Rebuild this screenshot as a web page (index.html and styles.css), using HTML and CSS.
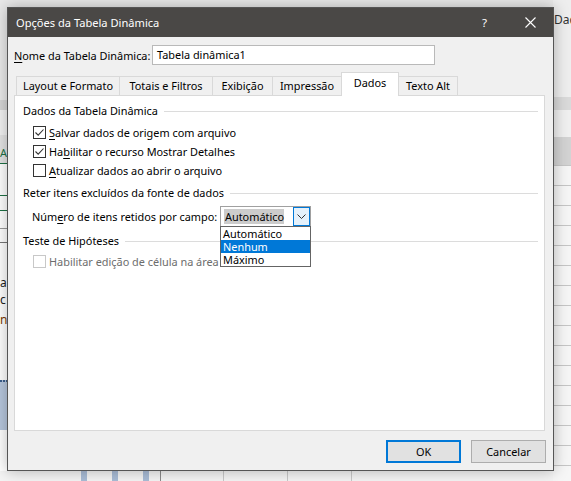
FILE: index.html
```html
<!DOCTYPE html>
<html lang="pt-BR">
<head>
<meta charset="utf-8">
<title>Opções da Tabela Dinâmica</title>
<link rel="stylesheet" href="styles.css">
</head>
<body>
<div class="desk">
  <div class="xl-left">
    <div class="xl-l-band"></div>
    <div class="xl-l-hdr">A</div>
    <div class="xl-l-txt t1">a</div>
    <div class="xl-l-txt t2">c</div>
    <div class="xl-l-txt t3">n</div>
    <div class="xl-l-sel"></div>
  </div>
  <div class="xl-right">
    <span class="dad">Dad</span>
    <div class="xl-r-grid"></div>
  </div>
  <div class="xl-bottom">
    <span class="bar b1"></span><span class="bar b2"></span><span class="bar b3"></span>
  </div>
</div>

<div class="dialog">
  <div class="titlebar">
    <span class="title">Opções da Tabela Dinâmica</span>
    <span class="help">?</span>
    <svg class="close" width="11" height="11" viewBox="0 0 11 11"><path d="M0.5 0.5 L10.5 10.5 M10.5 0.5 L0.5 10.5" stroke="#ffffff" stroke-width="1.1" fill="none"/></svg>
  </div>
  <div class="dlg-body">
    <div class="namerow">
      <span class="namelabel"><u>N</u>ome da Tabela Dinâmica:</span>
      <span class="nameinput">Tabela dinâmica1</span>
    </div>
    <div class="tabs">
      <span class="tab w1">Layout e Formato</span>
      <span class="tab w2">Totais e Filtros</span>
      <span class="tab w3">Exibição</span>
      <span class="tab w4">Impressão</span>
      <span class="tab w5 active">Dados</span>
      <span class="tab w6">Texto Alt</span>
    </div>
    <div class="panel">
      <div class="grp-head"><span>Dados da Tabela Dinâmica</span><i></i></div>
      <div class="chk-row first"><span class="box checked"><svg width="11" height="11" viewBox="0 0 11 11"><path d="M1.5 5.5 L4.2 8.2 L9.5 2.5" stroke="#333" stroke-width="1.1" fill="none"/></svg></span><span><u>S</u>alvar dados de origem com arquivo</span></div>
      <div class="chk-row"><span class="box checked"><svg width="11" height="11" viewBox="0 0 11 11"><path d="M1.5 5.5 L4.2 8.2 L9.5 2.5" stroke="#333" stroke-width="1.1" fill="none"/></svg></span><span>Ha<u>b</u>ilitar o recurso Mostrar Detalhes</span></div>
      <div class="chk-row"><span class="box"></span><span><u>A</u>tualizar dados ao abrir o arquivo</span></div>

      <div class="grp-head g2"><span>Reter itens excluídos da fonte de dados</span><i></i></div>
      <div class="num-row">
        <span class="num-label">Núm<u>e</u>ro de itens retidos por campo:</span>
        <div class="combo-wrap">
          <div class="combo">
            <span class="combo-val">Automático</span>
            <span class="combo-btn"><svg width="9" height="5" viewBox="0 0 9 5"><path d="M0.5 0.5 L4.5 4.5 L8.5 0.5" stroke="#333" stroke-width="1" fill="none"/></svg></span>
          </div>
          <div class="droplist">
            <div class="opt">Automático</div>
            <div class="opt sel">Nenhum</div>
            <div class="opt">Máximo</div>
          </div>
        </div>
      </div>

      <div class="grp-head g3"><span>Teste de Hipóteses</span><i></i></div>
      <div class="chk-row disabled"><span class="box"></span><span class="dis-label">Habilitar edição de célula na área</span></div>
    </div>
    <div class="buttons">
      <span class="btn default">OK</span>
      <span class="btn">Cancelar</span>
    </div>
  </div>
</div>
</body>
</html>
```

FILE: styles.css
```css
* { box-sizing: border-box; }
html, body { margin: 0; padding: 0; }
body {
  width: 571px;
  height: 481px;
  overflow: hidden;
  position: relative;
  background: #e9e9e9;
  font-family: "Noto Sans", "Open Sans", sans-serif;
  font-size: 10.9px;
  color: #000;
}
u { text-decoration: underline; text-underline-offset: 2px; }

/* ---------- Excel background ---------- */
.desk { position: absolute; inset: 0; }
.xl-left {
  position: absolute; left: 0; top: 0; width: 8px; height: 481px;
  overflow: hidden;
  background: linear-gradient(#e9e9e9 0 100px, #d6d6d6 100px 110px, #f2f2f2 110px 135px, #e4e4e4 135px 163px, #ffffff 163px);
}
.xl-l-band { position: absolute; left: 0; top: 163px; width: 8px; height: 80px;
  background: linear-gradient(#1e7145 0 1px, transparent 1px 32px, #1e7145 32px 33px, transparent 33px 47px, #1e7145 47px 48px, transparent 48px 65px, #9a9a9a 65px 66px, transparent 66px 79px, #777 79px 80px); }
.xl-l-hdr { position: absolute; left: 0; top: 147px; font-size: 11px; line-height: 12px; color: #1e7145; }
.xl-l-txt { position: absolute; left: 0; font-size: 12px; line-height: 14px; color: #222; }
.xl-l-txt.t1 { top: 276px; }
.xl-l-txt.t2 { top: 293px; }
.xl-l-txt.t3 { top: 313px; color: #7a3b00; }
.xl-l-sel { position: absolute; left: 0; top: 380px; width: 8px; height: 50px; background: #b7c7dd; border-top: 2px dotted #3b5e8c; border-right: 1px dotted #555; }

.xl-right {
  position: absolute; left: 553px; top: 0; width: 18px; height: 481px;
  background: linear-gradient(#eeeeee 0 97px, #dadada 97px 110px, #f0f0f0 110px 137px, #d3d3d3 137px 165px, #f6f6f6 165px);
}
.dad { position: absolute; left: 1px; top: 13px; font-size: 12px; line-height: 14px; color: #333; }
.xl-r-grid { position: absolute; left: 0; top: 165px; width: 18px; height: 316px;
  background: repeating-linear-gradient(#c6c6c6 0 1px, transparent 1px 20px); }

.xl-bottom {
  position: absolute; left: 0; top: 471px; width: 553px; height: 10px;
  background:
    linear-gradient(90deg, transparent 160px, #8a8a8a 160px 161px, transparent 161px 223px, #c8c8c8 223px 224px, transparent 224px 287px, #c8c8c8 287px 288px, transparent 288px 351px, #c8c8c8 351px 352px, transparent 352px),
    #f4f4f4;
}
.bar { position: absolute; top: 0; width: 6px; height: 10px; background: #a9bcd6; }
.b1 { left: 81px; } .b2 { left: 112px; } .b3 { left: 143px; }

/* ---------- Dialog ---------- */
.dialog {
  position: absolute;
  left: 7px; top: 7px;
  width: 547px; height: 464px;
  border: 1px solid #555555;
  background: #f0f0f0;
  box-shadow: 0 0 14px rgba(0,0,0,0.28);
  display: flex;
  flex-direction: column;
}
.titlebar {
  height: 29px;
  background: #4a4846;
  color: #fff;
  display: flex;
  align-items: center;
  padding-left: 8px;
  flex: none;
  font-size: 11.1px;
}
.title { flex: 1; }
.help { margin-right: 38px; font-size: 11.6px; }
.close { margin-right: 17px; }

.dlg-body {
  flex: 1;
  padding: 0 8px 9px 6px;
  display: flex;
  flex-direction: column;
}
.namerow {
  display: flex;
  align-items: center;
  margin-top: 8px;
  height: 20px;
}
.namelabel { width: 138px; white-space: nowrap; }
.nameinput {
  width: 283px; height: 20px;
  background: #fff;
  border: 1px solid #b9b9b9;
  padding: 0 0 0 4px;
  line-height: 18px;
}

.tabs {
  display: flex;
  align-items: flex-end;
  margin-top: 8px;
  padding-left: 2px;
  height: 23px;
  position: relative;
  z-index: 1;
}
.tab {
  height: 19px;
  border: 1px solid #d9d9d9;
  border-bottom: none;
  border-left: none;
  background: #f0f0f0;
  text-align: center;
  line-height: 18px;
  white-space: nowrap;
  margin-bottom: 1px;
}
.tab.w1 { width: 104px; border-left: 1px solid #d9d9d9; }
.tab.w2 { width: 93px; }
.tab.w3 { width: 60px; }
.tab.w4 { width: 69px; }
.tab.w5 { width: 57px; }
.tab.w6 { width: 59px; border-left: none; }
.tab.active {
  height: 24px;
  margin-bottom: 0;
  background: #fff;
  line-height: 20px;
  border-left: 1px solid #d9d9d9;
  margin-left: -1px;
  width: 58px;
}

.panel {
  height: 336px;
  margin-top: -1px;
  background: #fff;
  border: 1px solid #d9d9d9;
  padding: 7px 6px 0 8px;
  flex: none;
}
.grp-head {
  display: flex;
  align-items: center;
  height: 16px;
  line-height: 16px;
  white-space: nowrap;
}
.grp-head i { flex: 1; border-top: 1px solid #dcdcdc; margin-left: 6px; }
.grp-head.g2 { margin-top: 5px; }
.grp-head.g3 { margin-top: 6px; }

.chk-row {
  display: flex;
  align-items: center;
  height: 19px;
  padding-left: 10px;
  white-space: nowrap;
}
.chk-row.first { margin-top: 4px; }
.box {
  width: 13px; height: 13px;
  border: 1px solid #333;
  background: #fff;
  margin-right: 3px;
  display: flex; align-items: center; justify-content: center;
  flex: none;
}
.chk-row.disabled { margin-top: 3px; color: #6d6d6d; }
.chk-row.disabled .box { border-color: #c8c8c8; }
.dis-label { width: 171px; overflow: hidden; }

.num-row {
  display: flex;
  align-items: center;
  margin-top: 5px;
  padding-left: 9px;
  height: 21px;
  white-space: nowrap;
}
.num-label { width: 188px; }
.combo-wrap { position: relative; z-index: 2; }
.combo {
  width: 91px; height: 21px;
  border: 1px solid #a0a0a0;
  background: #fff;
  display: flex;
  align-items: center;
  padding: 0 0 0 3px;
}
.combo-val { background: #cccccc; padding: 0 1px; line-height: 15px; width: 60px; }
.combo-btn {
  margin-left: auto;
  width: 17px; height: 19px;
  border: 1px solid #0078d7;
  background: #e5f1fb;
  display: flex; align-items: center; justify-content: center;
}
.droplist {
  position: absolute;
  left: 0; top: 20px;
  width: 91px;
  border: 1px solid #646464;
  background: #fff;
}
.opt { height: 13px; line-height: 13px; padding-left: 2px; }
.opt.sel { background: #0078d7; color: #fff; }

.buttons {
  display: flex;
  justify-content: flex-end;
  gap: 10px;
  margin-top: 9px;
  margin-right: -1px;
}
.btn {
  width: 75px; height: 23px;
  border: 1px solid #adadad;
  background: #e1e1e1;
  text-align: center;
  line-height: 21px;
}
.btn.default { border: 2px solid #0078d7; line-height: 19px; }
```
